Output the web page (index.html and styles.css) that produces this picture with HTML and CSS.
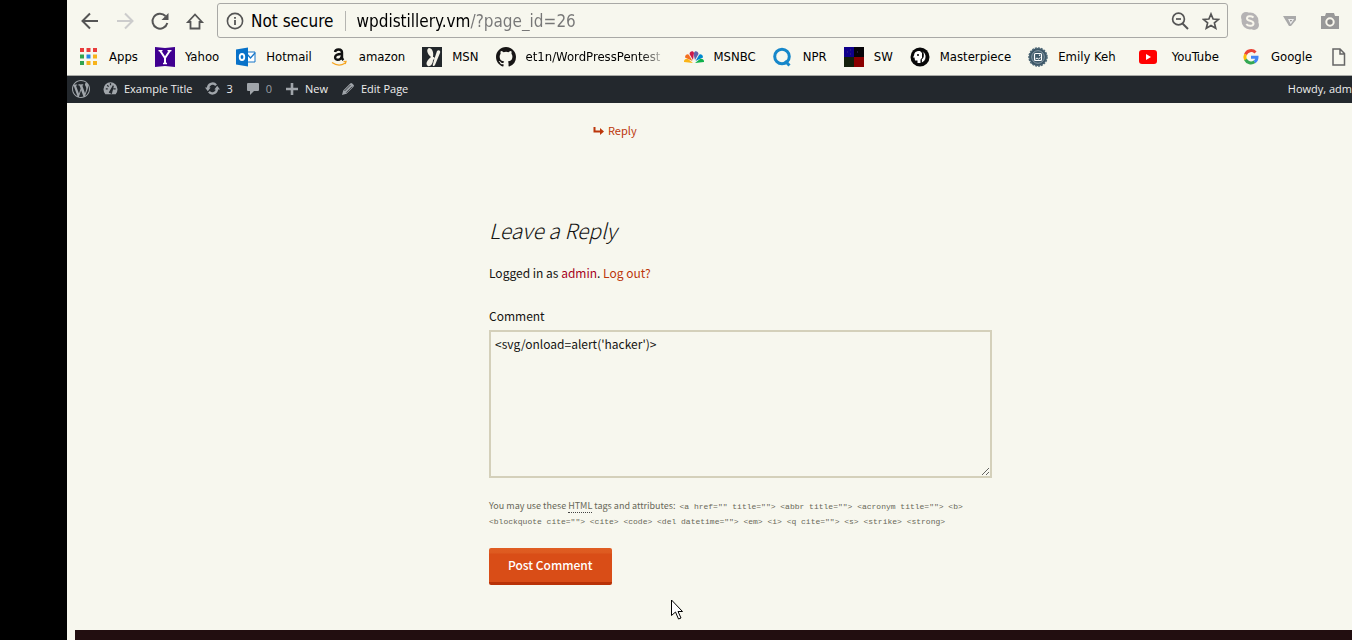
FILE: index.html
```html
<!DOCTYPE html>
<html lang="en">
<head>
<meta charset="utf-8">
<title>Example Title</title>
<link rel="stylesheet" href="styles.css">
</head>
<body>
<div class="desktop">
<div class="browser">
  <header class="toolbar">
    <nav class="nav-buttons" aria-label="Browser navigation">
      <button class="tool" aria-label="Back"><svg width="20" height="20" viewBox="0 0 20 20" fill="none" stroke="#555" stroke-width="2"><path d="M18 10H3M10 2.500 2.500 10 10 17.500"/></svg></button>
      <button class="tool" aria-label="Forward" disabled><svg width="20" height="20" viewBox="0 0 20 20" fill="none" stroke="#ccc" stroke-width="2"><path d="M2 10h15M10 2.500 17.500 10 10 17.500"/></svg></button>
      <button class="tool" aria-label="Reload"><svg width="20" height="20" viewBox="0 0 20 20" fill="none" stroke="#555" stroke-width="2"><path d="M17.300 12A7.500 7.500 0 1 1 15.500 5"/><path d="M18.500 2v7h-7z" fill="#555" stroke="none"/></svg></button>
      <button class="tool" aria-label="Home"><svg width="20" height="20" viewBox="0 0 20 20" fill="none" stroke="#555" stroke-width="1.800"><path d="M3 11 10 3.500l7 7.500h-2.500v6.500h-9V11z"/></svg></button>
    </nav>
    <div class="omnibox">
      <button class="security"><svg width="18" height="18" viewBox="0 0 18 18" fill="none" stroke="#555" stroke-width="1.600"><circle cx="9" cy="9" r="7.600"/><path d="M9 8v5M9 5v1.800" stroke-width="1.800"/></svg>Not secure</button>
      <input class="address" type="text" aria-label="Address" value="wpdistillery.vm/?page_id=26">
      <button class="omni-action" aria-label="Zoom"><svg width="18" height="18" viewBox="0 0 18 18" fill="none" stroke="#555" stroke-width="1.700"><circle cx="7.500" cy="7" r="5.900"/><path d="M5 7h5"/><path d="m11.500 11.500 5.500 5.500" stroke-width="2"/></svg></button>
      <button class="omni-action" aria-label="Bookmark this page"><svg width="18" height="18" viewBox="0 0 18 18" fill="none" stroke="#555" stroke-width="1.700"><path d="m9 2 2.100 5 5.400.4-4.100 3.500 1.300 5.300L9 13.400l-4.700 2.800 1.300-5.300L1.500 7.400 6.900 7z"/></svg></button>
    </div>
    <div class="extensions">
      <button class="extension" aria-label="Skype"><svg width="20" height="20" viewBox="0 0 20 20"><g fill="#b5b3b4"><circle cx="10" cy="10" r="8.500"/><circle cx="6" cy="6" r="5"/><circle cx="14" cy="14" r="5"/></g><path d="M13.500 6.500C11 4.500 7 5 7 7.400c0 3 6.500 1.700 6.500 5 0 2.800-5 3.300-7.200.7" fill="none" stroke="#f8f6ec" stroke-width="2"/></svg></button>
      <button class="extension" aria-label="Video helper"><svg width="14" height="12" viewBox="0 0 14 12"><path d="M0 1h13v4l-5 6H6z" fill="#aaa"/><path d="M6 4.500h4L7.800 8z" fill="#888" stroke="#eee" stroke-width="1.200"/></svg></button>
      <button class="extension" aria-label="Camera"><svg width="20" height="18" viewBox="0 0 20 18"><path d="M1 4h4l1-3h8l1 3h4v13H1z" fill="#999"/><circle cx="10" cy="10" r="3.700" fill="#888" stroke="#f8f6ec" stroke-width="2"/></svg></button>
    </div>
  </header>

  <nav class="bookmarks" aria-label="Bookmarks">
    <a class="bookmark" href="#"><svg width="20" height="20" viewBox="0 0 20 20"><path d="M1 1h4v4H1zm6.500 0h4v4h-4zM14 1h4v4h-4z" fill="#e83b3b"/><path d="M1 7.500h4v4H1zM1 14h4v4H1z" fill="#31a350"/><path d="M7.500 7.500h4v4h-4z" fill="#2385e8"/><path d="M14 7.500h4v4h-4zM14 14h4v4h-4zM7.500 14h4v4h-4z" fill="#f7b31b"/></svg>Apps</a>
    <a class="bookmark" href="#"><svg width="20" height="20" viewBox="0 0 20 20"><path d="M0 0 10 1 20 0v20l-10-1L0 20z" fill="#400090"/><path d="m5 3.500 5 7.500 5-7.500M10 11v6" fill="none" stroke="#fff" stroke-width="2"/><path d="M3.500 3.700h4m5 0h4M8 16.500h4" stroke="#fff" stroke-width="1.300"/></svg>Yahoo</a>
    <a class="bookmark" href="#"><svg width="20" height="20" viewBox="0 0 20 20"><path d="M11 5h8v10h-8z" fill="#fff" stroke="#1676c8"/><path d="m11 7 3.500 4L19 6" fill="none" stroke="#1676c8" stroke-width="1.300"/><path d="m0 2.500 12-2v19l-12-2z" fill="#0872c9"/><ellipse cx="6" cy="10" rx="2.300" ry="3" fill="none" stroke="#fff" stroke-width="1.800"/></svg>Hotmail</a>
    <a class="bookmark" href="#"><svg width="20" height="20" viewBox="0 0 20 20" fill="none"><path d="M6 5c.5-3.500 7-3.500 7 .5v5c0 1.200.4 1.700 1.400 2.700M12.800 7C4.500 6.500 5 12.800 8.500 12.800c2.500 0 4.300-1.800 4.300-4.300" stroke="#111" stroke-width="2.400"/><path d="M3 15.500c4.500 3.200 9 3.200 13 .7m-1.500-1.500 2.500-.2-.8 2.500" stroke="#f6a623" stroke-width="1.300"/></svg>amazon</a>
    <a class="bookmark" href="#"><svg width="20" height="20" viewBox="0 0 20 20"><path d="M0 0h20v20H0z" fill="#23282c"/><path d="M9 10C5 7 4 2 7 1c3 0 5 4 4 9 2 0 2 2 0 3 0 4-3 7-5 6-3-2-1-6 3-9zM12 13l3-9c2-2 4 0 3 2l-5 12c-1 2-3 1-2-1z" fill="#f5f3e9"/></svg>MSN</a>
    <a class="bookmark" href="#"><svg width="20" height="20" viewBox="0 0 16 16"><path fill="#171515" d="M8 0C3.580 0 0 3.580 0 8c0 3.540 2.290 6.530 5.470 7.590.4.070.55-.17.55-.38v-1.490c-2.010.37-2.530-.49-2.690-.94-.09-.23-.48-.94-.82-1.130-.28-.15-.68-.52-.01-.53.63-.01 1.080.58 1.230.82.72 1.210 1.870.87 2.330.66.07-.52.28-.87.51-1.070-1.780-.2-3.640-.89-3.640-3.950 0-.87.31-1.590.82-2.150-.08-.2-.36-1.020.08-2.120 0 0 .67-.21 2.200.82a7.600 7.600 0 0 1 4 0c1.530-1.040 2.200-.82 2.200-.82.44 1.100.16 1.920.08 2.120.51.56.82 1.270.82 2.150 0 3.070-1.870 3.750-3.650 3.950.29.25.54.73.54 1.480v2.200c0 .21.15.46.55.38A8 8 0 0 0 16 8c0-4.420-3.580-8-8-8z"/></svg><span class="clipped">et1n/WordPressPentest</span></a>
    <a class="bookmark" href="#"><svg width="20" height="20" viewBox="0 0 20 20"><path d="M9 16 0 15c-.5-3 3-4 4-3z" fill="#fbb416"/><path d="M8.500 14 1 10.500c0-3 3-4 4-2.500z" fill="#f36f21"/><path d="M9 13 5.500 7c0-3 4-4 4.500-1z" fill="#cc1a4a"/><path d="m11 13 3.500-6c0-3-4-4-4.500-1v3z" fill="#6460aa"/><path d="m11.500 14 7.500-3.500c0-3-3-4-4-2.500z" fill="#0089d0"/><path d="m11 16 9-1c.5-3-3-4-4-3z" fill="#0db14b"/></svg>MSNBC</a>
    <a class="bookmark" href="#"><svg width="20" height="20" viewBox="0 0 20 20" fill="none" stroke="#1687ca" stroke-width="3"><circle cx="9" cy="9.500" r="7.300"/><path d="m12 14 4.500 4.500"/></svg>NPR</a>
    <a class="bookmark" href="#"><svg width="20" height="20" viewBox="0 0 20 20"><path d="M0 0h20v20H0z" fill="#060408"/><path d="M0 0h10v10H0z" fill="#10008b"/><path d="M0 10h10v10H0z" fill="#14200c"/><path d="M10 10h10v10H10z" fill="#8b0000"/><path d="M3 5h1m2-2h1m-1 4h1m6-2h1" stroke="#443377"/></svg>SW</a>
    <a class="bookmark" href="#"><svg width="20" height="20" viewBox="0 0 20 20"><circle cx="10" cy="10" r="9.500" fill="#080808"/><path d="M10 4C6 3.500 4 6 4.200 8L3 10.500h1.500l.5 3h2.500V16h3v-3.500l1.500-1.500V6z" fill="#fff"/><path d="M11.500 4c2 1.500 2.500 4 1.500 6.500l-1.500 2V16c5.500-2 6.500-10 0-12z" fill="#fff" stroke="#080808" stroke-width=".8"/><circle cx="8" cy="8" r="1" fill="#000"/></svg>Masterpiece</a>
    <a class="bookmark roomy" href="#"><svg width="20" height="20" viewBox="0 0 20 20" fill="none"><circle cx="10" cy="10" r="9" fill="#3e5868"/><circle cx="10" cy="10" r="9" stroke="#4c6675" stroke-width="1.500" stroke-dasharray="2 1"/><circle cx="10" cy="10" r="6.300" stroke="#9fb0ba" stroke-width=".8"/><rect x="6.500" y="6.500" width="7" height="7" rx="1" stroke="#fff" stroke-width="1.200"/><path d="m7.500 12 1.500-1 1.500 1 2-1.500" stroke="#fff"/><circle cx="11.500" cy="8.300" r=".7" fill="#fff"/></svg>Emily Keh</a>
    <a class="bookmark roomy" href="#"><svg width="20" height="20" viewBox="0 0 20 20"><rect x="1" y="3" width="18" height="14" rx="3" fill="#f00"/><path d="m8 7 5 3-5 3z" fill="#fff"/></svg><span class="inset">YouTube</span></a>
    <a class="bookmark" href="#"><svg width="20" height="20" viewBox="0 0 20 20" fill="none" stroke-width="3"><path d="M14.500 5.500A6 6 0 0 0 4.500 7.500" stroke="#ea4335"/><path d="M4.500 7.300a6 6 0 0 0 0 5.400" stroke="#fbbc05"/><path d="M4.500 12.500a6 6 0 0 0 9 2.300" stroke="#34a853"/><path d="M10 10.200h6c0 2-.8 3.600-2.500 4.700" stroke="#4285f4"/></svg>Google</a>
    <a class="bookmark" href="#" aria-label="Untitled page"><svg width="20" height="20" viewBox="0 0 20 20" fill="none" stroke="#666" stroke-width="1.500"><path d="M4 2h7l4.500 4.500V18H4zM11 2v5h4.500"/></svg></a>
  </nav>

  <nav class="adminbar" aria-label="Site administration">
    <a class="admin-item" href="#" aria-label="WordPress"><svg width="18" height="18" viewBox="0 0 20 20"><path fill="#a0a5aa" d="M20 10c0-5.510-4.490-10-10-10S0 4.490 0 10s4.490 10 10 10 10-4.490 10-10zM7.780 15.370 4.370 6.220c.55-.02 1.170-.08 1.170-.08.5-.06.44-1.130-.06-1.110 0 0-1.450.11-2.370.11-.18 0-.37 0-.58-.01C4.120 2.690 6.870 1.110 10 1.110c2.330 0 4.450.87 6.050 2.340-.68-.11-1.650.39-1.650 1.580 0 .74.450 1.360.9 2.100.35.610.55 1.360.55 2.460 0 1.490-1.400 5-1.400 5l-3.030-8.370c.54-.02.82-.17.82-.17.5-.05.44-1.250-.06-1.220 0 0-1.440.12-2.380.12-.87 0-2.330-.12-2.330-.12-.5-.03-.56 1.200-.06 1.220l.92.080 1.260 3.410zM17.410 10c.24-.64.740-1.870.43-4.250.7 1.290 1.050 2.710 1.050 4.250 0 3.290-1.730 6.240-4.400 7.780.97-2.590 1.940-5.200 2.920-7.780zM6.100 18.090C3.120 16.650 1.110 13.530 1.110 10c0-1.300.23-2.480.72-3.590C3.250 10.300 4.670 14.200 6.100 18.090zm4.030-6.630 2.580 6.980c-.86.29-1.760.45-2.710.45-.79 0-1.570-.11-2.290-.33.81-2.380 1.620-4.740 2.420-7.100z"/></svg></a>
    <a class="admin-item" href="#"><svg width="15" height="15" viewBox="0 0 16 16"><path d="M2.500 14a7.500 7.500 0 1 1 11 0z" fill="#a0a5aa"/><path d="m7 12 4-7-2 8zM3 8.500h2M4.500 4.500 6 6M8 2.500v2M11 8.500h2.500" fill="#23282d" stroke="#23282d" stroke-width="1.300"/></svg>Example Title</a>
    <a class="admin-item" href="#"><svg width="15" height="15" viewBox="0 0 16 16"><path d="M3.300 7.500a4.800 4.800 0 0 1 8.500-3M12.700 8.500a4.800 4.800 0 0 1-8.500 3" fill="none" stroke="#a0a5aa" stroke-width="2.600"/><path d="M0 7h6l-3 4zM10 9h6l-3-4z" fill="#a0a5aa"/></svg>3</a>
    <a class="admin-item muted" href="#"><svg width="14" height="14" viewBox="0 0 14 14"><path d="M2 1h10q1 0 1 1v6q0 1-1 1H8l-4 4V9H2Q1 9 1 8V2q0-1 1-1z" fill="#a0a5aa"/></svg>0</a>
    <a class="admin-item" href="#"><svg width="14" height="14" viewBox="0 0 14 14"><path d="M5.700 1h2.600v4.700H13v2.600H8.300V13H5.700V8.300H1V5.700h4.700z" fill="#a0a5aa"/></svg>New</a>
    <a class="admin-item" href="#"><svg width="14" height="14" viewBox="0 0 14 14"><path d="m1 13 1.200-4.500 7-7q1-1 2 0l1.300 1.300q1 1 0 2l-7 7z" fill="#a0a5aa"/><path d="m3.500 9 6-6M5.200 10.700l6-6" stroke="#23282d" stroke-width=".8"/></svg>Edit Page</a>
    <a class="admin-item account" href="#">Howdy, adm</a>
  </nav>

  <main class="page">
    <div class="reply-row"><a class="reply-link" href="#"><svg width="11" height="12" viewBox="0 0 11 12"><path d="M1.500 3v4.500H8" fill="none" stroke="#bc360a" stroke-width="2"/><path d="m7 4 4 3.500L7 11z" fill="#bc360a"/></svg>Reply</a></div>
    <form class="comment-form" onsubmit="return false">
      <h3 class="form-title">Leave a Reply</h3>
      <p class="logged-in">Logged in as <a class="user-link" href="#">admin</a>. <a class="logout-link" href="#">Log out?</a></p>
      <label class="field-label" for="comment">Comment</label>
      <textarea class="comment-box" id="comment" spellcheck="false">&lt;svg/onload=alert('hacker')&gt;</textarea>
      <p class="allowed-tags">You may use these <abbr class="term" title="HyperText Markup Language">HTML</abbr> tags and attributes: <code class="tags">&lt;a href="" title=""&gt; &lt;abbr title=""&gt; &lt;acronym title=""&gt; &lt;b&gt; <br>&lt;blockquote cite=""&gt; &lt;cite&gt; &lt;code&gt; &lt;del datetime=""&gt; &lt;em&gt; &lt;i&gt; &lt;q cite=""&gt; &lt;s&gt; &lt;strike&gt; &lt;strong&gt;</code></p>
      <button class="submit" type="submit">Post Comment</button>
    </form>
  </main>
  <footer class="site-footer"></footer>
</div>
</div>
<svg class="cursor" width="13" height="22" viewBox="0 0 13 22"><path d="M.5 1v15.500l4-3.500 3 7 2.500-1-3-6.500h4.500z" fill="#fff" stroke="#000"/></svg>
</body>
</html>
```
FILE: styles.css
```css
* { box-sizing: border-box; }
body { margin: 0; background: #000; overflow: hidden; }
a { text-decoration: none; color: inherit; }
button { border: 0; padding: 0; background: none; font: inherit; color: inherit; }
svg { flex: none; display: block; }

.desktop { padding-left: 67px; }
.browser {
  min-height: 100vh;
  display: flex;
  flex-direction: column;
  background: #f7f7ee;
  overflow: hidden;
}

/* Browser chrome */
.toolbar {
  display: flex;
  align-items: center;
  height: 40px;
  padding: 1px 2px 0 5px;
  font: 17px "DejaVu Sans Condensed", "DejaVu Sans", sans-serif;
  color: #000;
}
.nav-buttons, .extensions { display: flex; }
.tool { width: 35px; display: grid; place-items: center; }
.omnibox {
  flex: 1;
  display: flex;
  align-items: center;
  height: 35px;
  margin: 0 2px 0 5px;
  padding: 0 1px 0 8px;
  border: 1px solid #a9a9a6;
  border-radius: 3px;
}
.security {
  display: flex;
  align-items: center;
  gap: 7px;
  padding-right: 12px;
  border-right: 1px solid #b5b5b1;
}
.address {
  flex: 1;
  min-width: 0;
  margin-left: 10px;
  padding: 0;
  border: 0;
  outline: 0;
  font: inherit;
  color: transparent;
  background: linear-gradient(to right, #000 114px, #777 114px);
  -webkit-background-clip: text;
  background-clip: text;
}
.omni-action { width: 31px; display: grid; place-items: center; }
.extension { width: 40px; display: grid; place-items: center; }

.bookmarks {
  display: flex;
  align-items: center;
  gap: 17px;
  height: 36px;
  padding: 0 0 2px 12px;
  border-bottom: 1px solid #a9aaa6;
  font: 13px "DejaVu Sans Condensed", "DejaVu Sans", sans-serif;
  color: #000;
  white-space: nowrap;
}
.bookmark { display: flex; align-items: center; gap: 10px; flex: none; }
.clipped {
  width: 141px;
  overflow: hidden;
  -webkit-mask-image: linear-gradient(to right, #000 115px, transparent);
  mask-image: linear-gradient(to right, #000 115px, transparent);
}
.inset { padding-left: 4px; }
.roomy { padding-right: 5px; }

/* WordPress admin bar */
.adminbar {
  display: flex;
  align-items: center;
  gap: 13px;
  height: 27px;
  padding: 0 0 2px 5px;
  background: #23282d;
  color: #eee;
  font: 11px "Open Sans", sans-serif;
  white-space: nowrap;
}
.admin-item { display: flex; align-items: center; gap: 6px; flex: none; }
.muted { color: #9a9fa4; }
.account { margin-left: auto; }

/* Page */
.page {
  flex: 1;
  padding: 17px 0 0 422px;
  font: 12px/20px "Noto Sans CJK SC", "Noto Sans", sans-serif;
  color: #141412;
}
.reply-row { padding-left: 104px; font-size: 11px; }
.reply-link { display: inline-flex; align-items: center; gap: 4px; color: #bc360a; }
.comment-form { max-width: 503px; padding-top: 75px; }
.form-title { margin: 0; font-size: 21px; line-height: 28px; font-weight: 300; font-style: italic; }
.logged-in { margin: 19px 0 23px; }
.user-link { color: #a6001c; }
.logout-link { color: #bc360a; }
.field-label { display: block; }
.comment-box {
  display: block;
  width: 100%;
  height: 148px;
  margin-top: 4px;
  padding: 2px 4px;
  border: 2px solid #d4d0ba;
  background: #f7f7ee;
  color: inherit;
  font: inherit;
  outline: 0;
}
.allowed-tags { margin: 20px 0; font-size: 9px; line-height: 15px; color: #686758; white-space: nowrap; }
.term { text-decoration: none; border-bottom: 1px dotted #444; }
.tags { margin-left: 2px; font: 8px/10px "Liberation Mono", monospace; }
.submit {
  display: block;
  height: 37px;
  padding: 0 19px;
  border-bottom: 3px solid #b93207;
  border-radius: 2px;
  background: linear-gradient(#e05d22, #dd5a20 5px, #d94d17 6px);
  color: #fff;
  font-weight: 500;
}
.site-footer { height: 10px; margin-left: 8px; background: #220e10; }

.cursor { position: absolute; left: 671px; top: 599px; }
```
